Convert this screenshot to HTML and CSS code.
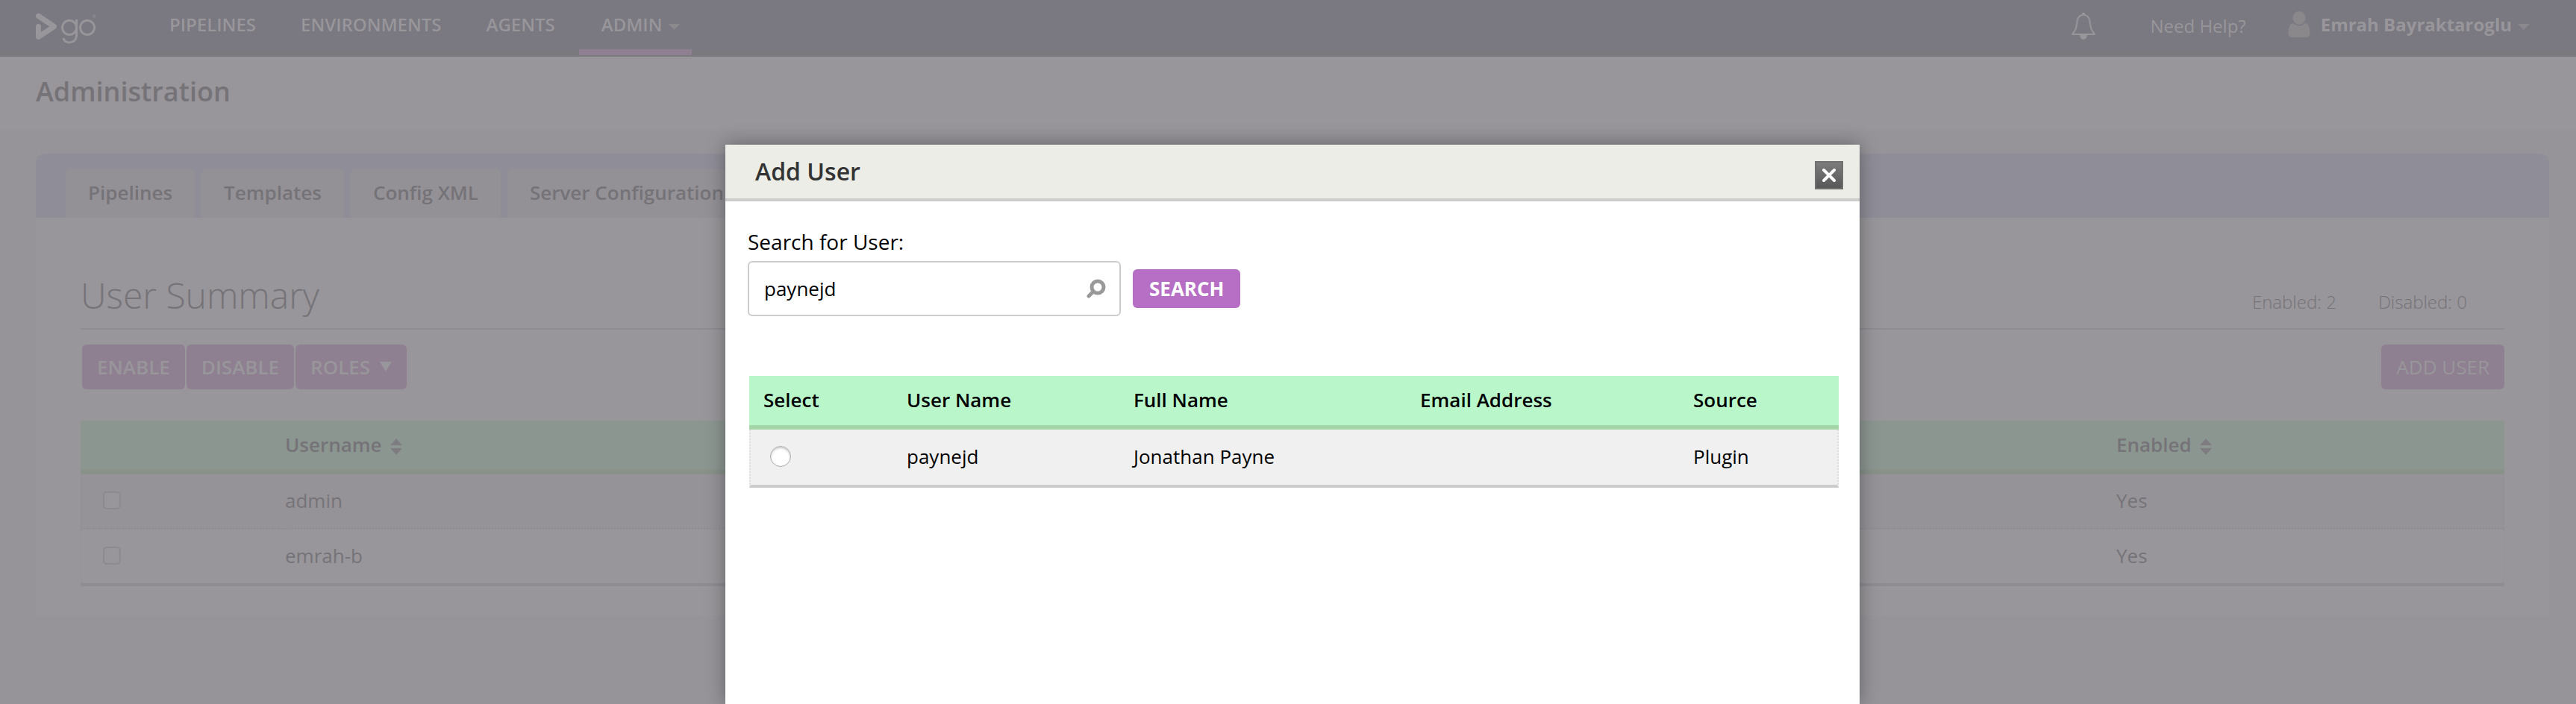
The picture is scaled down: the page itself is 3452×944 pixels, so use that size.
FILE: index.html
```html
<!DOCTYPE html>
<html lang="en">
<head>
<meta charset="utf-8">
<title>Administration - Go</title>
<link rel="stylesheet" href="styles.css">
</head>
<body>
<header class="topbar">
  <a class="logo" href="#" aria-label="Go">
    <svg width="84" height="44" viewBox="0 0 84 44" fill="none" stroke="currentColor">
      <path d="M3.500 4.500L24.500 18.500L3.500 32.500V18.500" stroke-width="7" stroke-linejoin="round" stroke-linecap="round"/>
      <circle cx="45" cy="20" r="9.500" stroke-width="3"/>
      <path d="M54.500 9V30C54.500 42.500 38 42.500 37 34" stroke-width="3"/>
      <circle cx="69" cy="20" r="9.500" stroke-width="3"/>
      <circle cx="78.500" cy="4.500" r="1.500" stroke-width="1"/>
    </svg>
  </a>
  <nav class="nav">
    <a href="#">PIPELINES</a>
    <a href="#">ENVIRONMENTS</a>
    <a href="#">AGENTS</a>
    <a href="#" class="current">ADMIN <i class="caret"></i></a>
  </nav>
  <div class="tools">
    <button class="bell" aria-label="Notifications">
      <svg width="34" height="38" viewBox="0 0 34 38" fill="none" stroke="currentColor" stroke-width="2">
        <path d="M17 1V4" stroke-width="4"/>
        <path d="M2 30H32C29 26 26.500 24 26 16C25.500 8 23 4 17 4S8.500 8 8 16C7.500 24 5 26 2 30Z" stroke-linejoin="round"/>
        <path d="M13 31C13 37.500 21 37.500 21 31Z" fill="currentColor"/>
      </svg>
    </button>
    <a class="help" href="#">Need Help?</a>
    <a class="user" href="#">
      <svg width="30" height="36" viewBox="0 0 30 36" fill="currentColor">
        <ellipse cx="15" cy="9" rx="8.500" ry="9"/>
        <path d="M7 16C11 20.500 19 20.500 23 16C28 17 29.500 22 29.500 29C29.500 33 27 35 24 35H6C3 35 .5 33 .5 29C.5 22 2 17 7 16Z"/>
      </svg>
      <span>Emrah Bayraktaroglu</span><i class="caret"></i>
    </a>
  </div>
</header>
<div class="heading"><h1>Administration</h1></div>
<main class="panel">
  <nav class="tabs">
    <a href="#">Pipelines</a>
    <a href="#">Templates</a>
    <a href="#">Config XML</a>
    <a href="#">Server Configuration</a>
  </nav>
  <section class="content">
    <div class="summary">
      <h2>User Summary</h2>
      <ul class="counts"><li>Enabled: 2</li><li>Disabled: 0</li></ul>
    </div>
    <div class="actions">
      <button>ENABLE</button>
      <button>DISABLE</button>
      <button>ROLES <i class="arrow"></i></button>
      <button class="add">ADD USER</button>
    </div>
    <table class="grid users">
      <colgroup><col class="c-check"><col class="c-name"><col class="c-mid"><col></colgroup>
      <thead>
        <tr><th></th><th>Username <svg class="sort" width="16" height="22" viewBox="0 0 16 22"><path d="M8 0L16 9H0ZM8 22L0 13H16Z"/></svg></th><th></th><th>Enabled <svg class="sort" width="16" height="22" viewBox="0 0 16 22"><path d="M8 0L16 9H0ZM8 22L0 13H16Z"/></svg></th></tr>
      </thead>
      <tbody>
        <tr><td><input type="checkbox" aria-label="admin"></td><td>admin</td><td></td><td>Yes</td></tr>
        <tr><td><input type="checkbox" aria-label="emrah-b"></td><td>emrah-b</td><td></td><td>Yes</td></tr>
      </tbody>
    </table>
  </section>
</main>
<div class="modal" role="dialog" aria-labelledby="dialog-title">
  <div class="modal-head">
    <h2 id="dialog-title">Add User</h2>
    <button class="close" aria-label="Close">
      <svg width="20" height="20" viewBox="0 0 20 20" stroke="currentColor" stroke-width="4" stroke-linecap="round"><path d="M3 3L17 17M17 3L3 17"/></svg>
    </button>
  </div>
  <div class="modal-body">
    <label for="search">Search for User:</label>
    <form class="search">
      <div class="field">
        <input id="search" type="text" value="paynejd">
        <svg width="26" height="26" viewBox="0 0 26 26" fill="none" stroke="currentColor"><circle cx="15" cy="11" r="8" stroke-width="5"/><path d="M9 17L3 23" stroke-width="5" stroke-linecap="round"/></svg>
      </div>
      <button type="button">SEARCH</button>
    </form>
    <table class="grid results">
      <colgroup><col class="r-select"><col class="r-user"><col class="r-full"><col class="r-mail"><col></colgroup>
      <thead><tr><th>Select</th><th>User Name</th><th>Full Name</th><th>Email Address</th><th>Source</th></tr></thead>
      <tbody><tr><td><input type="radio" name="pick" aria-label="paynejd"></td><td>paynejd</td><td>Jonathan Payne</td><td></td><td>Plugin</td></tr></tbody>
    </table>
  </div>
</div>
</body>
</html>
```
FILE: styles.css
```css
* { box-sizing: border-box; }

body {
  margin: 0;
  min-height: 100vh;
  overflow: hidden;
  background: #969498;
  color: #757378;
  font: 26px/36px "Open Sans", "Noto Sans", sans-serif;
}

h1, h2, ul { margin: 0; padding: 0; }
a { color: inherit; text-decoration: none; }
button { font: inherit; border: 0; padding: 0; cursor: pointer; }

.topbar {
  display: flex;
  height: 76px;
  padding: 0 62px 0 48px;
  background: #7a7880;
  border-bottom: 6px solid #7a797d;
  color: #98969a;
  font-size: 24px;
  line-height: 34px;
}
.logo { margin-top: 17px; width: 149px; }
.nav { display: flex; height: 74px; }
.nav a { padding: 16px 30px 0; }
.nav a.current {
  display: flex;
  gap: 8px;
  margin-left: 2px;
  padding-right: 16px;
  border-bottom: 8px solid #8e8091;
}
.nav, .user { font-weight: 600; }
.caret {
  width: 16px;
  height: 8px;
  margin-top: 16px;
  background: #8b898d;
  clip-path: polygon(0 0, 100% 0, 50% 100%);
}
.tools { display: flex; margin-left: auto; }
.bell { background: none; color: inherit; height: 38px; margin: 16px 72px 0 0; }
.help { padding-top: 18px; margin-right: 56px; }
.user { display: flex; gap: 8px; padding-top: 16px; font-weight: 700; }
.user svg { color: #8a888b; margin: -1px 6px 0 0; }

.heading { height: 98px; padding: 22px 48px; background: #98969a; }
.heading h1 { font-size: 36px; line-height: 50px; font-weight: 600; }

.panel { margin: 32px 36px 0 48px; background: #98969a; border-radius: 12px 12px 0 0; }
.tabs {
  display: flex;
  gap: 9px;
  height: 86px;
  padding: 20px 40px 0;
  background: #8f8d97;
  border-radius: 12px 12px 0 0;
  font-weight: 600;
}
.tabs a { padding: 14px 30px; background: #939196; border-radius: 6px 6px 0 0; }

.content { padding: 70px 60px 40px; }
.summary {
  display: flex;
  justify-content: space-between;
  align-items: baseline;
  height: 80px;
  border-bottom: 2px solid #8e8c91;
}
.summary h2 { font-size: 48px; line-height: 68px; font-weight: 300; }
.counts { display: flex; gap: 56px; list-style: none; margin-right: 50px; font-size: 24px; font-weight: 300; }

.actions { display: flex; gap: 2px; padding: 20px 0 42px 2px; }
.actions button {
  height: 60px;
  padding: 0 20px;
  border-radius: 6px;
  background: #8e8091;
  color: #98969a;
  font-weight: 600;
}
.actions .add { margin-left: auto; font-weight: 400; }
.arrow {
  display: inline-block;
  width: 16px;
  height: 13px;
  margin: 0 0 4px 6px;
  background: #98969a;
  clip-path: polygon(0 0, 100% 0, 50% 100%);
}

.grid { width: 100%; table-layout: fixed; border-collapse: separate; border-spacing: 0; }
.grid th { font-weight: 600; text-align: left; }
.grid th, .grid td { padding: 0 0 2px; }
.grid input { appearance: none; display: block; margin: 0; }

.users th { height: 72px; background: #8c9691; border-bottom: 6px solid #899189; }
.users td { height: 74px; border-bottom: 2px dotted #8f8d92; }
.users tr:first-child td { background: #959397; }
.users tr:last-child td { height: 76px; border-bottom: 4px solid #8e8c91; }
.users tbody td:first-child { border-left: 1px dotted #8f8d92; }
.users tbody td:last-child { border-right: 1px dotted #8f8d92; }
.users input { width: 24px; height: 24px; margin-left: 29px; border: 2px solid #8c8a8f; border-radius: 5px; background: #98969a; }
.sort { margin-left: 5px; vertical-align: -4px; fill: #7e7c80; }
.c-check { width: 274px; }
.c-name { width: 1203px; }
.c-mid { width: 1251px; }

.modal {
  position: absolute;
  top: 194px;
  bottom: 0;
  left: 972px;
  right: 960px;
  background: #fff;
  color: #000;
  box-shadow: 0 0 24px rgba(0, 0, 0, .35);
}
.modal-head {
  display: flex;
  justify-content: space-between;
  height: 76px;
  padding: 14px 22px 0 40px;
  background: #ecede6;
  border-bottom: 4px solid #ccc;
}
.modal-head h2 { font-size: 32px; line-height: 44px; font-weight: 600; color: #333; }
.close {
  display: grid;
  place-items: center;
  width: 38px;
  height: 38px;
  margin-top: 8px;
  border: 2px solid #707070;
  background: linear-gradient(#7c7c7c, #585858);
  color: #fff;
}
.modal-body { padding: 34px 28px 0 30px; }
.modal-body label { display: block; font-size: 28px; line-height: 40px; }
.search { display: flex; align-items: center; gap: 16px; margin: 6px 0 80px; }
.field {
  display: flex;
  align-items: center;
  width: 500px;
  height: 74px;
  padding: 0 18px 0 20px;
  border: 2px solid #ccc;
  border-radius: 6px;
  color: #999;
}
.field input { flex: 1; min-width: 0; border: 0; padding: 0; outline: 0; font: inherit; color: #000; background: none; }
.search button { height: 52px; padding: 0 22px; border-radius: 6px; background: #b66fc4; color: #fff; font-weight: 700; }

.results { width: calc(100% - 2px); margin-left: 2px; }
.results th, .results td { padding-left: 19px; }
.results th { height: 72px; background: #b9f7cb; border-bottom: 6px solid #a5d6a7; }
.results td { height: 78px; background: #f0f0f0; border-bottom: 4px solid #ccc; }
.results td:first-child { border-left: 2px dotted #ddd; }
.results td:last-child { border-right: 2px dotted #ddd; }
.results input { width: 28px; height: 28px; margin-left: 7px; border: 1px solid #aaa; border-radius: 50%; background: #fff; box-shadow: inset 0 2px 3px #ccc; }
.r-select { width: 192px; }
.r-user { width: 304px; }
.r-full { width: 384px; }
.r-mail { width: 366px; }
```
